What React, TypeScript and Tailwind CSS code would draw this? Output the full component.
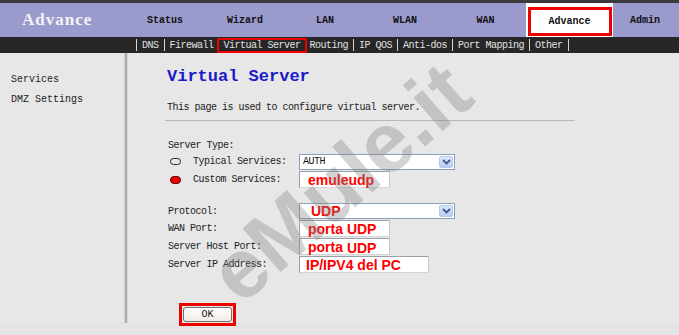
const mono = { fontFamily: '"Liberation Mono", "DejaVu Sans Mono", monospace' }

const topNav = ['Status', 'Wizard', 'LAN', 'WLAN', 'WAN']

const Sep = () => <span className="mx-[5px] inline-block h-[12px] w-px bg-[#d6d6d6]" />

const Chevron = () => (
  <svg width="9" height="6" viewBox="0 0 9 6">
    <path d="M1 1 L4.5 4.5 L8 1" stroke="#3d5a8a" strokeWidth="1.8" fill="none" />
  </svg>
)

const FakeSelect = ({ children, w }: { children: React.ReactNode; w: string }) => (
  <div className={`${w} flex h-[16px] items-center border border-[#8aa0bf] bg-white`}>
    <div className="flex flex-1 items-center overflow-hidden pl-[3px]">{children}</div>
    <div className="m-[1px] flex h-[12px] w-[14px] items-center justify-center rounded-[2px] border border-[#b9c9ea] bg-gradient-to-b from-[#dbe6fd] to-[#b7cbf5]">
      <Chevron />
    </div>
  </div>
)

const FakeInput = ({ children, w }: { children?: React.ReactNode; w: string }) => (
  <div className={`${w} flex h-[17px] items-center border border-[#9aa0a8] border-b-[#d4d4d4] border-r-[#c8c8c8] bg-white pl-[8px]`}>
    {children}
  </div>
)

const Red = ({ children, className = '' }: { children: React.ReactNode; className?: string }) => (
  <span
    className={`whitespace-nowrap text-[14px] font-bold leading-none text-[#ff0000] ${className}`}
    style={{ fontFamily: '"Liberation Sans", Arial, sans-serif' }}
  >
    {children}
  </span>
)

const Label = ({ children, w = 'w-[131px]' }: { children: React.ReactNode; w?: string }) => (
  <span className={`${w} text-[10px] tracking-[-0.5px] text-[#222]`}>{children}</span>
)

export default function App() {
  return (
    <div className="relative h-[335px] w-[679px] overflow-hidden bg-[#e4e4e4]" style={mono}>
      {/* header */}
      <div className="h-[3px] bg-[#3a3a3a]" />
      <div className="grid h-[34px] grid-cols-[125px_80px_80px_80px_80px_81px_87px_1fr] items-center bg-[#9a9acd]">
        <div className="pl-[22px] text-[17px] font-bold text-[#f4f4f4]" style={{ fontFamily: '"Liberation Serif", serif', letterSpacing: '1px' }}>
          Advance
        </div>
        {topNav.map((n) => (
          <div key={n} className="text-center text-[10px] font-bold text-[#111]">
            {n}
          </div>
        ))}
        <div className="flex h-full items-center justify-center bg-white pt-[3px]">
          <div className="flex h-[29px] w-[84px] items-center justify-center border-[3px] border-[#ee0000] text-[10px] font-bold text-[#111]">
            Advance
          </div>
        </div>
        <div className="pr-[2px] text-center text-[10px] font-bold text-[#111]">Admin</div>
      </div>

      {/* sub nav */}
      <div className="flex h-[16px] items-center bg-[#272727] pl-[131px] text-[10px] tracking-[-0.5px] text-[#e2e2e2]">
        <Sep />
        <span>DNS</span>
        <Sep />
        <span>Firewall</span>
        <span className="ml-[3px] flex h-[15px] items-center border-2 border-[#ee0000] pl-[5px] pr-[4px]">Virtual Server</span>
        <span className="ml-[3px]">Routing</span>
        <Sep />
        <span>IP QOS</span>
        <Sep />
        <span>Anti-dos</span>
        <Sep />
        <span>Port Mapping</span>
        <Sep />
        <span>Other</span>
        <Sep />
      </div>

      {/* body */}
      <div className="flex h-[270px] bg-[#e7e7e7]">
        <div className="w-[123px] pl-[11px] pt-[20px] text-[10px] text-[#222]">
          <div className="h-[20px] leading-[14px]">Services</div>
          <div className="h-[20px] leading-[14px]">DMZ Settings</div>
        </div>
        <div className="flex w-[5px]">
          <div className="w-[2px] bg-[#dadada]" />
          <div className="w-[2px] bg-[#a9a9a9]" />
          <div className="w-px bg-[#d8d8d8]" />
        </div>
        <div className="flex-1 pl-[37px]">
          <h1 className="mt-[14px] h-[20px] pl-[2px] text-[17px] font-bold leading-[20px] text-[#1a1acb]">Virtual Server</h1>
          <p className="mt-[15px] h-[12px] pl-[2px] text-[10px] leading-[12px] tracking-[-0.5px] text-[#222]">
            This page is used to configure virtual server.
          </p>
          <div className="mt-[6px] h-px w-[410px] bg-[#b8b8b8]" />

          <div className="mt-[19px] h-[12px] pl-[3px] text-[10px] leading-[12px] tracking-[-0.5px] text-[#222]">Server Type:</div>

          <div className="mt-[1px] flex h-[17px] items-center pl-[5px]">
            <span className="mr-[12px] h-[7px] w-[11px] rounded-full border border-[#222]" />
            <Label w="w-[106px]">Typical Services:</Label>
            <FakeSelect w="w-[156px]">
              <span className="text-[10px] tracking-[-0.5px] text-[#111]">AUTH</span>
            </FakeSelect>
          </div>
          <div className="mt-[1px] flex h-[17px] items-center pl-[5px]">
            <span className="mr-[12px] h-[8px] w-[11px] rounded-full border border-[#600] bg-[#ee0000]" />
            <Label w="w-[106px]">Custom Services:</Label>
            <FakeInput w="w-[91px]">
              <Red className="text-[13px]">emuleudp</Red>
            </FakeInput>
          </div>

          <div className="mt-[15px] flex h-[16px] items-center pl-[3px]">
            <Label>Protocol:</Label>
            <FakeSelect w="w-[156px]">
              <Red className="ml-[8px]">UDP</Red>
            </FakeSelect>
          </div>
          <div className="mt-[1px] flex h-[17px] items-center pl-[3px]">
            <Label>WAN Port:</Label>
            <FakeInput w="w-[91px]">
              <Red>porta UDP</Red>
            </FakeInput>
          </div>
          <div className="mt-[1px] flex h-[17px] items-center pl-[3px]">
            <Label>Server Host Port:</Label>
            <FakeInput w="w-[91px]">
              <Red>
                porta <span className="relative top-[1px]">UDP</span>
              </Red>
            </FakeInput>
          </div>
          <div className="mt-[1px] flex h-[17px] items-center pl-[3px]">
            <Label>Server IP Address:</Label>
            <FakeInput w="w-[130px]">
              <Red className="-ml-[2px]">IP/IPV4 del PC</Red>
            </FakeInput>
          </div>

          <div className="ml-[14px] mt-[30px] w-[57px] border-[3px] border-[#ee0000] p-px">
            <button className="flex h-[15px] w-full items-center justify-center rounded-[3px] border border-[#6e6e6e] bg-gradient-to-b from-white to-[#f1ece6] text-[10px] leading-none text-[#111]">
              OK
            </button>
          </div>
        </div>
      </div>

      {/* watermark */}
      <div
        className="pointer-events-none absolute left-[340px] top-[182px] -translate-x-1/2 -translate-y-1/2 rotate-[-41deg] whitespace-nowrap text-[84px] font-bold leading-none text-[#808080]/35"
        style={{ fontFamily: '"Liberation Sans", Arial, sans-serif' }}
      >
        eMule.it
      </div>
    </div>
  )
}
